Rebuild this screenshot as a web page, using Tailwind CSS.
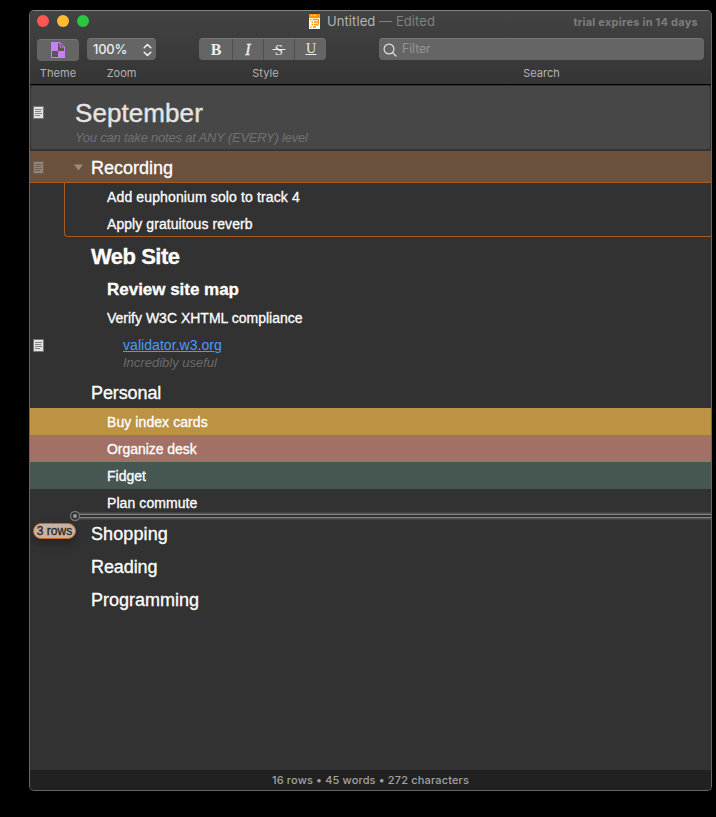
<!DOCTYPE html>
<html lang="en">
<head>
<meta charset="utf-8">
<title>Untitled</title>
<script src="https://cdn.jsdelivr.net/npm/@tailwindcss/browser@4"></script>
</head>
<body class="bg-black h-[817px] overflow-hidden pl-[29px] pt-[10px]">
<svg class="hidden">
  <symbol id="note" viewBox="0 0 11 13"><path d="M.5.5h10v12H.5z" fill="#e2e2e2" stroke="#777"/><path d="M2 3.500h7M2 5.500h6M2 7.500h7M2 9.500h5" stroke="#858585"/></symbol>
</svg>
<div class="w-[683px] h-[781px] rounded-[5px] border border-[#666] border-t-[#858585] bg-[#323232] overflow-hidden flex flex-col font-['Inter',sans-serif] text-[#b4b4b4]">
  <header class="h-[74px] shrink-0 border-b border-black bg-linear-to-b from-[#434343] to-[#353535]">
    <div class="h-[22px] flex items-center relative">
      <div class="flex gap-[8px] pl-[7px] -mt-[2px]">
        <span class="size-[12px] rounded-full bg-[#fe5751]"></span>
        <span class="size-[12px] rounded-full bg-[#febc2e]"></span>
        <span class="size-[12px] rounded-full bg-[#28c840]"></span>
      </div>
      <svg class="ml-[220px] -mt-px" width="11" height="15" viewBox="0 0 11 15"><path d="M0 0h11v15H0z" fill="#fff"/><path d="M0 0h11v4H0z" fill="#ff9500"/><path d="M2 1.500h1M4 1.500h3" stroke="#ffd596"/><path d="M1 5.500h1.500M3.500 5.500h5.500M2.500 8h1.500M5 8h4.500M2.500 10.500h1.500M5 10.500h3.500M1 13h1.500M4 13h3" stroke="#ff9500" stroke-width="1.300"/><path d="M9.500 5v5L8 12" fill="none" stroke="#ff9500"/></svg>
      <div class="ml-[7px] text-[13px] tracking-[0.08px] whitespace-pre">Untitled <span class="text-[#818181]">— Edited</span></div>
      <div class="ml-auto pr-[13px] pt-px text-[11px] font-bold text-[#7d7d7d] tracking-[0.24px]">trial expires in 14 days</div>
    </div>
    <div class="flex items-start pt-[5px] pl-[7px] text-[11px]">
      <div class="w-[42px] flex flex-col items-center">
        <div class="w-[42px] h-[22px] mt-px rounded-[4px] bg-[#656565] border-t border-[#777] flex items-center justify-center">
          <svg class="-mt-px" width="14" height="16" viewBox="0 0 14 16"><path d="M.5.5h8.500l4.500 4.500v10.500H.5z" fill="#575757" stroke="#cd7cfa"/><path d="M0 0h7v9H0zM7 9h7v7H7z" fill="#cd7cfa"/><path d="M9 .5V5h4.500" fill="none" stroke="#cd7cfa"/></svg>
        </div>
        <div class="h-[16px] leading-[16px] mt-[4px] tracking-[0.1px]">Theme</div>
      </div>
      <div class="w-[69px] ml-[8px] flex flex-col items-center">
        <div class="w-[69px] h-[22px] rounded-[4px] bg-[#656565] border-t border-[#777] flex items-center pl-[6px] pr-[4px] text-[13px] text-[#ececec]">
          <span class="-tracking-[0.25px] font-medium">100%</span>
          <svg class="ml-auto" width="9" height="14" viewBox="0 0 9 14"><path d="M1.200 4.800l3.300-3.300 3.300 3.300M1.200 9.200l3.300 3.300 3.300-3.300" fill="none" stroke="#f2f2f2" stroke-width="1.500" stroke-linecap="round" stroke-linejoin="round"/></svg>
        </div>
        <div class="h-[16px] leading-[16px] mt-[5px]">Zoom</div>
      </div>
      <div class="w-[127px] ml-[43px] flex flex-col items-center">
        <div class="w-[127px] h-[22px] rounded-[4px] bg-[#656565] border-t border-[#777] grid grid-cols-[34px_31px_31px_31px] leading-[21px] text-center text-[#ececec] text-[16px] font-['Liberation_Serif',serif]">
          <span class="font-bold pl-px border-r border-[#4e4e4e]">B</span>
          <span class="italic border-r border-[#4e4e4e] [-webkit-text-stroke:0.4px_#ececec]">I</span>
          <span class="border-r border-[#4e4e4e] flex justify-center"><svg width="14" height="20" viewBox="0 0 14 20"><text x="7" y="15.500" text-anchor="middle" font-size="15" fill="#ececec">S</text><path d="M.5 10.500h13" stroke="#ececec"/></svg></span>
          <span class="flex justify-center"><svg width="14" height="20" viewBox="0 0 14 20"><text x="7" y="14" text-anchor="middle" font-size="14" fill="#ececec">U</text><path d="M1.500 15.500h11" stroke="#ececec"/></svg></span>
        </div>
        <div class="h-[16px] leading-[16px] mt-[5px] pl-[6px] tracking-[0.1px]">Style</div>
      </div>
      <div class="w-[325px] ml-[53px] flex flex-col items-center">
        <div class="w-[325px] h-[22px] rounded-[4px] bg-[#656565] border-t border-[#777] flex items-center pl-[4px] text-[12.500px] text-[#949494]">
          <svg width="14" height="14" viewBox="0 0 14 14"><circle cx="6" cy="6" r="4.900" fill="none" stroke="#dedede" stroke-width="1.200"/><path d="M9.500 9.500l3.500 3.500" stroke="#dedede" stroke-width="1.300" stroke-linecap="round"/></svg>
          <span class="ml-[5px] -tracking-[0.15px]">Filter</span>
        </div>
        <div class="h-[16px] leading-[16px] mt-[5px]">Search</div>
      </div>
    </div>
  </header>
  <main class="flex-1 font-['Liberation_Sans',Arial,sans-serif] text-white text-[14px] leading-[27px] whitespace-nowrap [-webkit-text-stroke:0.3px]">
    <section class="h-[66px] rounded-[4px] bg-[#474747] border border-b-2 border-[#343434] flex pl-[2px] relative [-webkit-text-stroke:0px]">
      <svg class="mt-[20px]" width="11" height="13"><use href="#note"/></svg>
      <div class="ml-[31px] pt-[11px]">
        <h1 class="text-[26px] leading-[32px] tracking-[0.08px] text-[#e4e4e4] [-webkit-text-stroke:0.4px]">September</h1>
        <p class="text-[13px] leading-[16px] pt-px italic text-[#717171] -tracking-[0.21px]">You can take notes at ANY (EVERY) level</p>
      </div>
    </section>
    <div class="h-[32px] bg-[#6a523f] border-b border-[#a85b1c] flex items-center">
      <svg class="ml-[3px] mt-px opacity-35" width="11" height="13"><use href="#note"/></svg>
      <svg class="ml-[30px] mt-[2px]" width="9" height="7" viewBox="0 0 9 7"><path d="M0 .5h9L4.500 6.500z" fill="#9b8b7e"/></svg>
      <span class="ml-[8px] pt-[3px] text-[18px]">Recording</span>
    </div>
    <div class="ml-[34px] h-[54px] pl-[42px] border-l border-b border-[#a85b1c] rounded-bl-[4px]">
      <div class="h-[27px] pt-px tracking-[0.13px]">Add euphonium solo to track 4</div>
      <div class="h-[26px] pt-px tracking-[0.07px]">Apply gratuitous reverb</div>
    </div>
    <div class="h-[39px] leading-[40px] pl-[61px] text-[22px] font-bold -tracking-[0.5px]">Web Site</div>
    <div class="h-[28px] leading-[28px] pl-[77px] text-[17px] font-bold -tracking-[0.02px]">Review site map</div>
    <div class="h-[27px] pt-px pl-[77px]">Verify W3C XHTML compliance</div>
    <div class="h-[46px] flex pl-[3px] [-webkit-text-stroke:0px]">
      <svg class="mt-[8px]" width="11" height="13"><use href="#note"/></svg>
      <div class="ml-[79px] pt-px">
        <div class="leading-[27px] text-[#4a9cf8] underline tracking-[0.05px]">validator.w3.org</div>
        <p class="text-[13px] leading-[16px] -mt-[4px] italic text-[#6a6a6a]">Incredibly useful</p>
      </div>
    </div>
    <div class="h-[31px] leading-[32px] pl-[61px] text-[18px] -tracking-[0.1px]">Personal</div>
    <div class="h-[27px] pt-px pl-[77px] tracking-[0.08px] bg-[#bc9343]">Buy index cards</div>
    <div class="h-[27px] pt-px pl-[77px] -tracking-[0.05px] bg-[#a37066]">Organize desk</div>
    <div class="h-[27px] pt-px pl-[77px] bg-[#465651]">Fidget</div>
    <div class="h-[27px] pt-px pl-[77px] tracking-[0.08px]">Plan commute</div>
    <div class="relative pt-px text-[18px] leading-[34px]">
      <svg class="absolute left-[39px] -top-[7px]" width="642" height="14" viewBox="0 0 642 14"><path d="M10 5h632M10 9h632" stroke="#505050" stroke-width="3"/><path d="M10 5.500h632M10 8.500h632" stroke="#858585"/><path d="M10 7h632" stroke="#303030" stroke-width="2"/><circle cx="6" cy="7" r="4.500" fill="#303030" stroke="#777" stroke-width="1.300"/><circle cx="6" cy="7" r="2" fill="#999"/></svg>
      <div class="absolute left-[3px] top-[7px] w-[43px] h-[16px] rounded-full border-[1.500px] border-[#c96a25] bg-[#c9b2a2] text-[#262626] text-[12px] leading-[14px] text-center shadow-[0_5px_10px_rgba(0,0,0,.25)]">3 rows</div>
      <div class="h-[33px] pl-[61px] tracking-[0.1px]">Shopping</div>
      <div class="h-[33px] pl-[61px] -tracking-[0.1px]">Reading</div>
      <div class="h-[33px] pl-[61px]">Programming</div>
    </div>
  </main>
  <footer class="h-[20px] shrink-0 bg-[#212121] text-center leading-[20px] text-[11px] font-medium text-[#a3a3a3] tracking-[0.15px]">16 rows • 45 words • 272 characters</footer>
</div>
</body>
</html>
